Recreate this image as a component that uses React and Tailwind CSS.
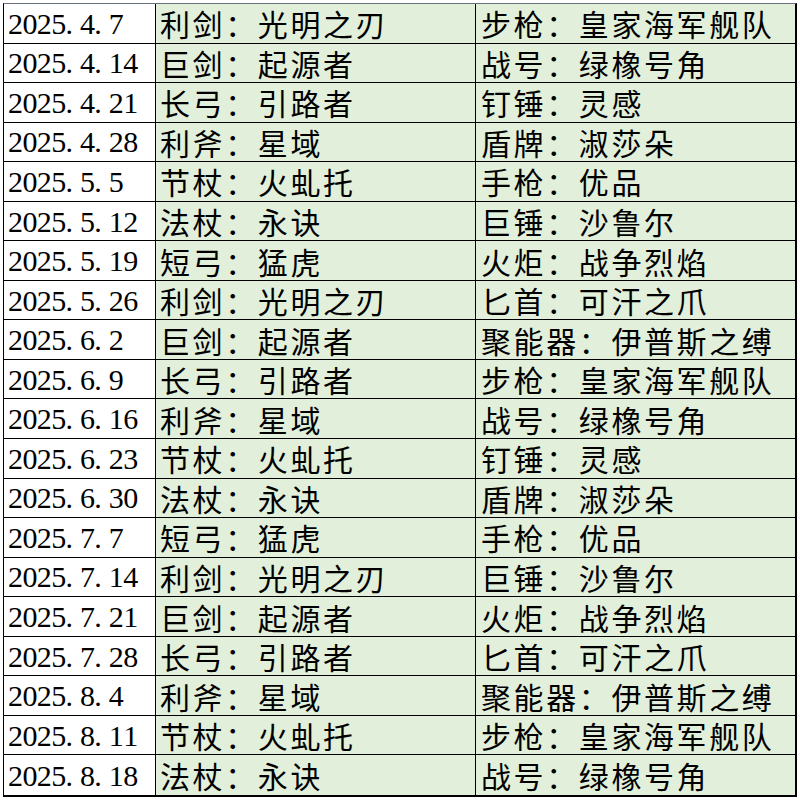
const rows = [
    ['2025.4.7', '利剑：光明之刃', '步枪：皇家海军舰队'],
    ['2025.4.14', '巨剑：起源者', '战号：绿橡号角'],
    ['2025.4.21', '长弓：引路者', '钉锤：灵感'],
    ['2025.4.28', '利斧：星域', '盾牌：淑莎朵'],
    ['2025.5.5', '节杖：火虬托', '手枪：优品'],
    ['2025.5.12', '法杖：永诀', '巨锤：沙鲁尔'],
    ['2025.5.19', '短弓：猛虎', '火炬：战争烈焰'],
    ['2025.5.26', '利剑：光明之刃', '匕首：可汗之爪'],
    ['2025.6.2', '巨剑：起源者', '聚能器：伊普斯之缚'],
    ['2025.6.9', '长弓：引路者', '步枪：皇家海军舰队'],
    ['2025.6.16', '利斧：星域', '战号：绿橡号角'],
    ['2025.6.23', '节杖：火虬托', '钉锤：灵感'],
    ['2025.6.30', '法杖：永诀', '盾牌：淑莎朵'],
    ['2025.7.7', '短弓：猛虎', '手枪：优品'],
    ['2025.7.14', '利剑：光明之刃', '巨锤：沙鲁尔'],
    ['2025.7.21', '巨剑：起源者', '火炬：战争烈焰'],
    ['2025.7.28', '长弓：引路者', '匕首：可汗之爪'],
    ['2025.8.4', '利斧：星域', '聚能器：伊普斯之缚'],
    ['2025.8.11', '节杖：火虬托', '步枪：皇家海军舰队'],
    ['2025.8.18', '法杖：永诀', '战号：绿橡号角'],
];

const cjk = { fontFamily: '"Noto Sans CJK SC", sans-serif' };

// half-width cells so the date reads like a monospaced Song face
const DateText = ({ value }) => (
    <span className="flex" style={{ fontFamily: '"Liberation Serif", serif' }}>
        {value.split('').map((ch, i) => (
            <span key={i} className="inline-block w-[14.4px] text-left">{ch}</span>
        ))}
    </span>
);

const App = () => {
    return (
        <div className="w-[800px] h-[800px] bg-white pt-[3px] pl-[3px]">
            <div className="w-[794px] h-[794px] border-t border-t-gray-500 border-l border-l-black border-r-2 border-b-2 border-r-black border-b-black grid grid-cols-[152px_320px_1fr] grid-rows-[repeat(20,minmax(0,1fr))] text-black">
                {rows.map(([date, left, right], idx) => (
                    <div key={idx} className="contents">
                        <div className={`flex items-center pl-[4px] bg-white border-r border-black text-[30px] ${idx < rows.length - 1 ? 'border-b' : ''}`}>
                            <DateText value={date} />
                        </div>
                        <div
                            className={`flex items-center pl-[4px] bg-[#e2efda] border-r border-black text-[30px] tracking-[2.6px] leading-none whitespace-nowrap ${idx < rows.length - 1 ? 'border-b' : ''}`}
                            style={cjk}
                        >
                            {left}
                        </div>
                        <div
                            className={`flex items-center pl-[5px] bg-[#e2efda] border-black text-[30px] tracking-[2.6px] leading-none whitespace-nowrap ${idx < rows.length - 1 ? 'border-b' : ''}`}
                            style={cjk}
                        >
                            {right}
                        </div>
                    </div>
                ))}
            </div>
        </div>
    );
};

export default App;
